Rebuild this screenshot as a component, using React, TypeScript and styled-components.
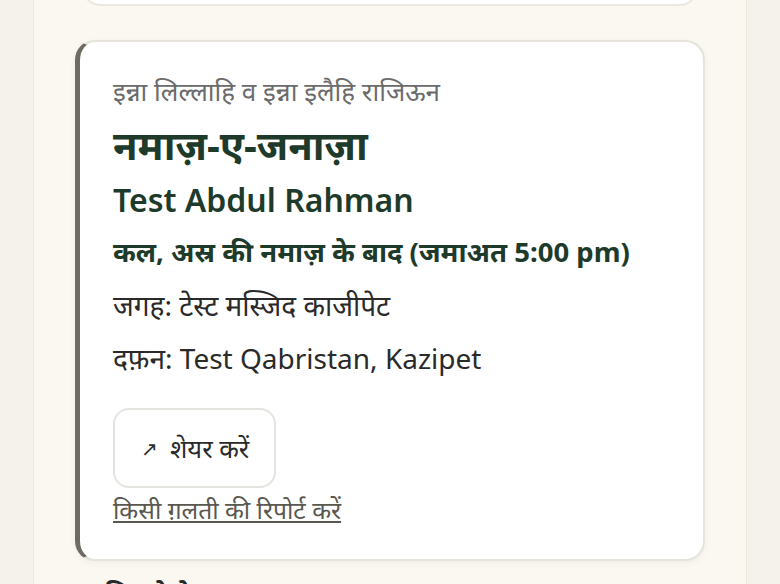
import React from 'react';
import styled, {createGlobalStyle} from 'styled-components';

const GlobalStyle = createGlobalStyle`
  html, body {
    margin: 0;
    padding: 0;
    height: 584px;
    overflow: hidden;
    background: #f5f1eb;
    font-family: "Noto Sans", "Open Sans", sans-serif;
  }
`;

const Page = styled.div`
  width: 714px;
  height: 584px;
  margin: 0 auto;
  box-sizing: border-box;
  padding: 0 41px;
  background: #fbf8f2;
  border-left: 1px solid #efe8d8;
  border-right: 1px solid #efe8d8;
  overflow: hidden;
`;

const PrevCard = styled.div`
  height: 60px;
  margin: -58px 6px 0;
  background: #ffffff;
  border: 2px solid #ece8df;
  border-radius: 20px;
`;

const Card = styled.article`
  margin-top: 34px;
  background: #ffffff;
  border: 2px solid #e6e3dc;
  border-left: 5px solid #6e6b62;
  border-radius: 20px;
  padding: 31px 33px 32px 33px;
  box-shadow: 0 2px 6px rgba(60, 50, 30, 0.06);
`;

const Dua = styled.p`
  margin: 0;
  font-size: 26px;
  line-height: 36px;
  color: #6b6b6b;
`;

const Title = styled.h1`
  margin: 10px 0 0;
  font-size: 40px;
  line-height: 52px;
  font-weight: 700;
  color: #1d3a2a;
`;

const Name = styled.h2`
  margin: 7px 0 0;
  font-size: 32px;
  line-height: 44px;
  font-weight: 600;
  color: #1d3a2a;
`;

const When = styled.p`
  margin: 10px 0 0;
  font-size: 27.5px;
  line-height: 40px;
  font-weight: 700;
  color: #1d3a2a;
`;

const Detail = styled.p`
  margin: 13px 0 0;
  font-size: 28px;
  line-height: 40px;
  color: #2a2a2a;
`;

const Actions = styled.div`
  display: flex;
  flex-direction: column;
  align-items: flex-start;
  margin-top: 30px;
`;

const ShareButton = styled.button`
  display: flex;
  align-items: center;
  gap: 12px;
  height: 80px;
  padding: 0 25px 0 26px;
  background: #ffffff;
  border: 2px solid #e6e4e0;
  border-radius: 16px;
  font-family: inherit;
  font-size: 25.5px;
  color: #2a2a2a;
  cursor: pointer;
`;

const Arrow = styled.span`
  font-size: 20px;
  font-weight: 300;
  color: #2a2a2a;
`;

const ReportLink = styled.a`
  margin-top: 5px;
  font-size: 24.6px;
  line-height: 34px;
  color: #5a5750;
  text-decoration: underline;
  cursor: pointer;
`;

const NextHeading = styled.h3`
  margin: 16px 0 0 30px;
  font-size: 26px;
  line-height: 32px;
  font-weight: 700;
  color: #2a2a2a;
`;

const App = (): JSX.Element => (
    <>
        <GlobalStyle/>
        <Page>
            <PrevCard/>
            <Card>
                <Dua>इन्ना लिल्लाहि व इन्ना इलैहि राजिऊन</Dua>
                <Title>नमाज़-ए-जनाज़ा</Title>
                <Name>Test Abdul Rahman</Name>
                <When>कल, अस्र की नमाज़ के बाद (जमाअत 5:00 pm)</When>
                <Detail>जगह: टेस्ट मस्जिद काजीपेट</Detail>
                <Detail>दफ़न: Test Qabristan, Kazipet</Detail>
                <Actions>
                    <ShareButton>
                        <Arrow>↗</Arrow>
                        शेयर करें
                    </ShareButton>
                    <ReportLink>किसी ग़लती की रिपोर्ट करें</ReportLink>
                </Actions>
            </Card>
            <NextHeading>पिछले ऐलान</NextHeading>
        </Page>
    </>
);

export default App;
